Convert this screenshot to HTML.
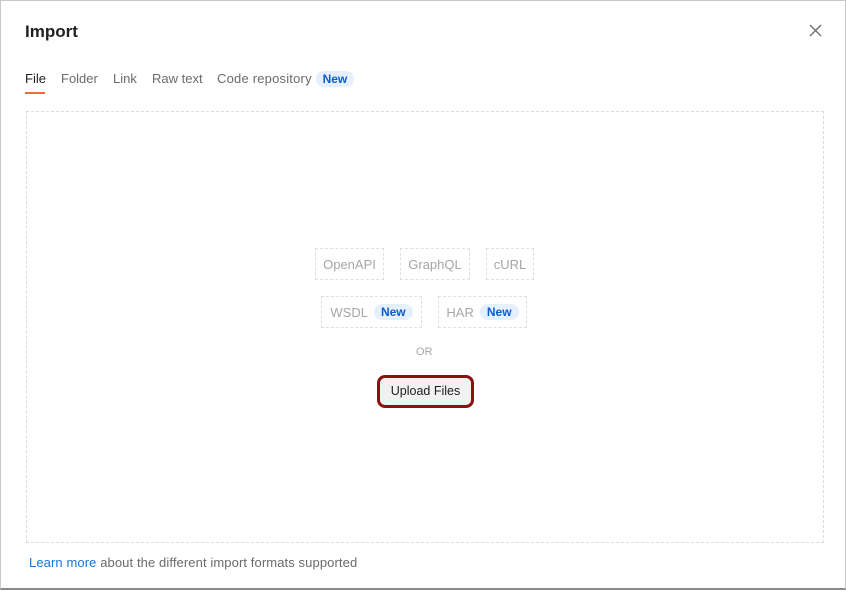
<!DOCTYPE html>
<html><head><style>
body{margin:0;width:846px;height:591px;background:#fff;font-family:"Liberation Sans",sans-serif;position:relative;overflow:hidden}
.win{position:absolute;left:0;top:0;width:844px;height:587px;border:1px solid #c8c8c8;border-bottom:2px solid #8a8a8a;background:#fff}
.a{position:absolute;white-space:nowrap}
.tab{font-size:13px;color:#6b6b6b;top:71px}
.new{background:#e6f0fd;color:#0b5ccf;font-weight:bold;border-radius:9px;padding:1px 7px;font-size:12px}
.box{position:absolute;border:1px dashed #e0e0e0;height:32px;display:flex;align-items:center;justify-content:center;font-size:13px;color:#a6a6a6;box-sizing:border-box;gap:6px}
</style></head><body>
<div class="win"></div>
<div class="a" style="left:25px;top:22px;font-size:17px;font-weight:bold;color:#212121">Import</div>
<svg class="a" style="left:809px;top:24px" width="13" height="13"><path d="M1 1L12 12M12 1L1 12" stroke="#6b6b6b" stroke-width="1.3"/></svg>
<div class="a tab" style="left:25px;color:#212121">File</div>
<div class="a" style="left:25px;top:92px;width:20px;height:2px;background:#f26b3a"></div>
<div class="a tab" style="left:61px">Folder</div>
<div class="a tab" style="left:113px">Link</div>
<div class="a tab" style="left:152px">Raw text</div>
<div class="a tab" style="left:217px;letter-spacing:0.2px">Code repository <span class="new" style="letter-spacing:0">New</span></div>
<div class="a" style="left:26px;top:111px;width:796px;height:430px;border:1px dashed #dcdcdc"></div>
<div class="box" style="left:315px;top:248px;width:69px">OpenAPI</div>
<div class="box" style="left:400px;top:248px;width:70px">GraphQL</div>
<div class="box" style="left:486px;top:248px;width:48px">cURL</div>
<div class="box" style="left:321px;top:296px;width:101px">WSDL <span class="new">New</span></div>
<div class="box" style="left:438px;top:296px;width:89px">HAR <span class="new">New</span></div>
<div class="a" style="left:416px;top:346px;font-size:11px;color:#a6a6a6">OR</div>
<div class="a" style="left:377px;top:375px;width:91px;height:27px;border:3px solid #8b1111;border-radius:8px;background:#f1f1f1;font-size:12.5px;color:#212121;text-align:center;line-height:27px">Upload Files</div>
<div class="a" style="left:29px;top:555px;font-size:13px;color:#6b6b6b;letter-spacing:0.1px"><span style="color:#1a73d9">Learn more</span> about the different import formats supported</div>
</body></html>
